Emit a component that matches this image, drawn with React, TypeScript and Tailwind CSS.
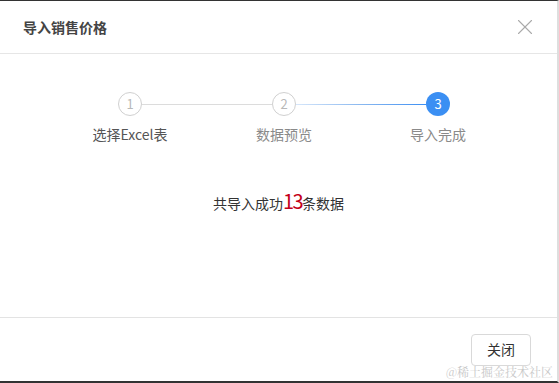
import { X } from "lucide-react";

const font = { fontFamily: '"Noto Sans CJK SC", "Noto Sans", sans-serif' };

function Step({
  num,
  label,
  active,
  left,
  right,
  labelClass,
}: {
  num: number;
  label: string;
  active?: boolean;
  left: string;
  right: string;
  labelClass: string;
}) {
  return (
    <div className="flex w-[154px] flex-col items-center">
      <div className="flex w-full items-center">
        <div className={`h-px flex-1 ${left}`} />
        <div
          className={
            active
              ? "flex h-[24px] w-[24px] items-center justify-center rounded-full bg-[#3b8ff3] text-[13px] text-white"
              : "flex h-[24px] w-[24px] items-center justify-center rounded-full border border-[#d0d0d0] bg-white text-[13px] text-[#b8b8b8]"
          }
        >
          {num}
        </div>
        <div className={`h-px flex-1 ${right}`} />
      </div>
      <div className={`mt-[8px] text-[14px] leading-[20px] ${labelClass}`}>{label}</div>
    </div>
  );
}

export default function App() {
  return (
    <div
      style={font}
      className="relative flex h-[383px] w-[559px] flex-col border-t border-b-2 border-r-2 border-t-[#333] border-b-[#333] border-r-[#dedede] bg-white"
    >
      <div className="flex h-[53px] shrink-0 items-center justify-between border-b border-[#e6e6e6] pl-[23px] pr-[19px]">
        <span className="text-[14px] font-bold text-[#444]">导入销售价格</span>
        <X size={26} strokeWidth={1} className="text-[#aaa]" />
      </div>
      <div className="flex flex-1 flex-col border-b border-[#e3e3e3]">
        <div className="mt-[38px] flex pl-[53px]">
          <Step num={1} label="选择Excel表" left="" right="bg-[#dcdcdc]" labelClass="text-[#555]" />
          <Step
            num={2}
            label="数据预览"
            left="bg-[#dcdcdc]"
            right="bg-gradient-to-r from-[#d6e6fa] to-[#8ab8ef]"
            labelClass="text-[#8a8a8a]"
          />
          <Step
            num={3}
            label="导入完成"
            active
            left="bg-gradient-to-r from-[#8ab8ef] to-[#3b8ff3]"
            right=""
            labelClass="text-[#8a8a8a]"
          />
        </div>
        <div className="mt-[44px] flex items-end justify-center text-[14px] text-[#333]">
          <span className="leading-[20px]">共导入成功</span>
          <span className="text-[20px] leading-[25px] tracking-[-1.5px] text-[#c4001a]">13</span>
          <span className="leading-[20px]">条数据</span>
        </div>
      </div>
      <div className="flex h-[63px] shrink-0 items-center justify-end pr-[26px]">
        <button className="h-[32px] w-[60px] rounded-[4px] border border-[#d9d9d9] bg-white text-[14px] text-[#333]">
          关闭
        </button>
      </div>
      <div
        className="absolute bottom-[1px] right-[4px] text-[12px] leading-[16px] text-[#c8c8c8]"
        style={{ fontFamily: '"Noto Serif CJK SC", "Noto Sans CJK SC", serif', textShadow: "0 0 1px #fff" }}
      >
        @稀土掘金技术社区
      </div>
    </div>
  );
}
